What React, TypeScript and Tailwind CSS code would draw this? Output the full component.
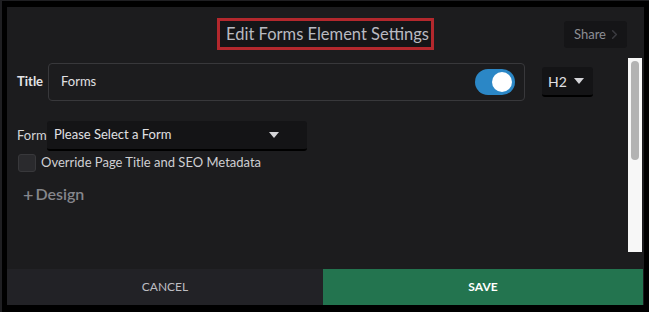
import { ChevronRight } from "lucide-react";

function Caret() {
  return (
    <svg width="10" height="6" viewBox="0 0 10 6" className="shrink-0">
      <path d="M0 0h10L5 6z" fill="#d4d4d8" />
    </svg>
  );
}

export default function App() {
  return (
    <div
      className="h-[312px] w-[649px] overflow-hidden border-l-2 border-t border-[#1f1f22] bg-black pl-[5px] pt-[6px]"
      style={{ fontFamily: "Lato, 'Noto Sans', sans-serif" }}
    >
      <div className="flex h-[298px] w-[637px] flex-col bg-[#1c1c1e]">
        <header className="grid h-[51px] grid-cols-[1fr_auto_1fr] items-start pt-[11px]">
          <div />
          <h1 className="flex h-[32px] items-center border-[3px] border-[#b3282d] bg-[#151517] pl-[6px] pr-[2px] text-[16.5px] text-[#b9bac1]">
            Edit Forms Element Settings
          </h1>
          <div className="flex justify-end pr-[17px] pt-[3px]">
            <button className="flex h-[27px] w-[63px] items-center justify-center gap-[1px] rounded-[3px] bg-[#151517] pl-[5px] text-[13px] text-[#8d8e94]">
              Share
              <ChevronRight size={15} strokeWidth={2.5} className="text-[#3a3a3f]" />
            </button>
          </div>
        </header>

        <div className="flex min-h-0 flex-1 text-[13px]">
          <div className="flex-1 pl-[10px] pt-[5px]">
            <div className="flex items-center">
              <span className="w-[31px] font-bold text-[#e4e4e7]">Title</span>
              <div className="flex h-[38px] w-[477px] items-center justify-between rounded-[4px] border border-[#38383b] pl-[12px] pr-[9px]">
                <span className="text-[#e0e0e3]">Forms</span>
                <span className="flex h-[26px] w-[40px] items-center justify-end rounded-full bg-[#2b87c6] pr-[3px]">
                  <span className="h-[20px] w-[20px] rounded-full bg-white" />
                </span>
              </div>
              <div className="ml-[17px] flex h-[30px] w-[51px] items-center justify-between rounded-[3px] border-b-2 border-black bg-[#141416] pl-[6px] pr-[9px] text-[14px] text-[#e0e0e3]">
                H2
                <Caret />
              </div>
            </div>

            <div className="mt-[20px] flex items-center">
              <span className="w-[30px] text-[#d4d4d8]">Form</span>
              <div className="flex h-[30px] w-[260px] items-center justify-between rounded-[3px] border-b-2 border-black bg-[#141416] pl-[7px] pr-[28px] text-[#e0e0e3]">
                Please Select a Form
                <Caret />
              </div>
            </div>

            <label className="mt-[2px] flex items-center gap-[5px] pl-[1px]">
              <span className="h-[18px] w-[18px] rounded-[3px] border border-[#38383b] bg-[#2a2a2d]" />
              <span className="text-[#cfcfd3]">Override Page Title and SEO Metadata</span>
            </label>

            <div className="mt-[8px] flex items-center gap-[2px] pl-[6px] text-[16px] font-semibold text-[#85868c]">
              <span className="text-[18px]">+</span>
              Design
            </div>
          </div>

          <div className="mr-[2px] h-[194px] w-[14px] bg-[#f7f7f7] px-[3px] pt-[3px]">
            <div className="h-[99px] w-[8px] rounded-full bg-[#b3b3b3]" />
          </div>
        </div>

        <footer className="flex h-[36px] shrink-0 text-[12px]">
          <button className="w-[316px] bg-[#222226] text-[#bdbdc2]">CANCEL</button>
          <button className="mr-[1px] flex-1 bg-[#23744f] font-bold text-white">SAVE</button>
        </footer>
      </div>
    </div>
  );
}
